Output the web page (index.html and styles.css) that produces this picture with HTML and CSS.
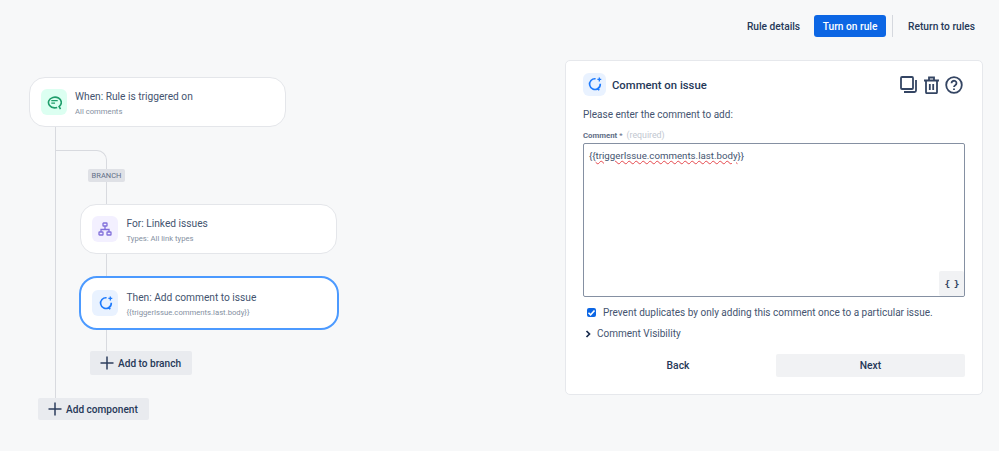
FILE: index.html
```html
<!DOCTYPE html>
<html lang="en">
<head>
<meta charset="utf-8">
<title>Rule editor</title>
<link rel="stylesheet" href="styles.css">
</head>
<body>
<div class="page">
  <header class="topbar">
    <button class="top-btn">Rule details</button>
    <button class="top-btn primary">Turn on rule</button>
    <span class="divider"></span>
    <button class="top-btn return">Return to rules</button>
  </header>
  <main class="main">
    <section class="canvas">
      <span class="line line-main"></span>
      <span class="line-curve"></span>
      <span class="line line-branch"></span>
      <div class="card card-when">
        <span class="tile tile-green">
          <svg width="15" height="15" viewBox="0 0 14 14" fill="none" stroke="#1f9d6b" stroke-width="1.500"><path d="M12.600 13.200 11.300 10.800A6 5 0 1 0 7 12c.9 0 1.700-.1 2.500-.4"/><path d="M4 5.300h6M4 7.500h3.500" stroke-width="1.200"/></svg>
        </span>
        <div class="card-text"><div class="card-title">When: Rule is triggered on</div><div class="card-sub">All comments</div></div>
      </div>
      <div class="badge">BRANCH</div>
      <div class="card card-for">
        <span class="tile tile-purple">
          <svg width="14" height="14" viewBox="0 0 14 14" fill="none" stroke="#8270db" stroke-width="1.300"><rect x="5" y="1" width="4" height="3" rx=".6"/><rect x="1" y="10" width="4" height="3" rx=".6"/><rect x="9" y="10" width="4" height="3" rx=".6"/><path d="M7 4v3.500M3 10V7.500h8V10"/></svg>
        </span>
        <div class="card-text"><div class="card-title">For: Linked issues</div><div class="card-sub">Types: All link types</div></div>
      </div>
      <div class="card card-then">
        <span class="tile tile-blue">
          <svg width="15" height="15" viewBox="0 0 14 14" fill="none" stroke="#1d7afc" stroke-width="1.500"><path d="M8 1.700A5 5 0 1 0 9.900 11l1.600 1.300M12.400 6.300a5 5 0 0 1-2.500 4.700"/><path d="M11.500 .5v3.600M9.700 2.300h3.600" stroke-width="1.200"/></svg>
        </span>
        <div class="card-text"><div class="card-title">Then: Add comment to issue</div><div class="card-sub">{{triggerIssue.comments.last.body}}</div></div>
      </div>
      <button class="add-btn add-branch"><svg width="14" height="14" viewBox="0 0 14 14" stroke="#2c3e5d" stroke-width="1.500"><path d="M7 .5v13M.5 7h13"/></svg>Add to branch</button>
      <button class="add-btn add-component"><svg width="14" height="14" viewBox="0 0 14 14" stroke="#2c3e5d" stroke-width="1.500"><path d="M7 .5v13M.5 7h13"/></svg>Add component</button>
    </section>
    <section class="panel">
      <div class="panel-head">
        <span class="tile tile-blue tile-small">
          <svg width="15" height="15" viewBox="0 0 14 14" fill="none" stroke="#1d7afc" stroke-width="1.500"><path d="M8 1.700A5 5 0 1 0 9.900 11l1.600 1.300M12.400 6.300a5 5 0 0 1-2.500 4.700"/><path d="M11.500 .5v3.600M9.700 2.300h3.600" stroke-width="1.200"/></svg>
        </span>
        <h2 class="panel-title">Comment on issue</h2>
        <div class="panel-tools">
          <svg width="17" height="17" viewBox="0 0 17 17" fill="none" stroke="#344563" stroke-width="1.800"><rect x="1" y="1" width="12" height="12" rx="1"/><path d="M16 4v10.500a1.500 1.500 0 0 1-1.500 1.500H4"/></svg>
          <svg width="15" height="18" viewBox="0 0 15 18" fill="none" stroke="#344563" stroke-width="1.800"><path d="M0 4.500h15M5 4.500V1.500h5v3M2 4.500v11.700a1 1 0 0 0 1 1h9a1 1 0 0 0 1-1V4.500M5.800 8v6M9.200 8v6"/></svg>
          <svg width="18" height="18" viewBox="0 0 18 18" fill="none" stroke="#344563" stroke-width="1.800"><circle cx="9" cy="9" r="7.800"/><path d="M6.500 7.200a2.500 2.400 0 1 1 3.800 2C9.400 9.800 9 10.200 9 11"/><path d="M9 12.500v1.500"/></svg>
        </div>
      </div>
      <p class="prompt">Please enter the comment to add:</p>
      <div class="field-label"><b>Comment</b> <i>*</i> <span>(required)</span></div>
      <div class="textbox">
        <div class="textbox-value">{{<u>triggerIssue.comments.last.body</u>}}</div>
        <button class="smart-btn">{ }</button>
      </div>
      <label class="check-row">
        <span class="check"><svg width="9" height="9" viewBox="0 0 9 9" fill="none" stroke="#fff" stroke-width="1.600"><path d="M1.500 4.700 3.600 6.800 7.500 2.500"/></svg></span>
        Prevent duplicates by only adding this comment once to a particular issue.
      </label>
      <div class="visibility">
        <svg width="6" height="8" viewBox="0 0 6 8" fill="none" stroke="#172b4d" stroke-width="1.700"><path d="M1.500 1 4.500 4 1.500 7"/></svg>
        Comment Visibility
      </div>
      <div class="actions">
        <button class="act back">Back</button>
        <button class="act next">Next</button>
      </div>
    </section>
  </main>
</div>
</body>
</html>
```
FILE: styles.css
```css
* { box-sizing: border-box; }
html, body { margin: 0; padding: 0; }
body {
  background: #f7f8f9;
  color: #172b4d;
  font-family: Roboto, "Liberation Sans", sans-serif;
  font-size: 10px;
}
button { font-family: inherit; border: 0; cursor: pointer; }
.page { width: 999px; height: 451px; overflow: hidden; }

.topbar {
  display: flex;
  align-items: center;
  justify-content: flex-end;
  height: 60px;
  padding: 0 24px 8px 0;
}
.top-btn {
  height: 22px;
  padding: 0;
  background: transparent;
  color: #253858;
  font-size: 10.200px;
  font-weight: 500;
  border-radius: 3px;
}
.top-btn.primary {
  width: 72px;
  margin-left: 14px;
  background: #0c66e4;
  color: #fff;
}
.divider { width: 1px; height: 22px; margin: 0 15px 0 6px; background: #d5d8de; }

.main { display: flex; align-items: flex-start; }
.canvas { position: relative; width: 565px; height: 391px; }

.card {
  position: absolute;
  display: flex;
  align-items: center;
  gap: 8px;
  width: 257px;
  height: 50px;
  padding: 0 11px;
  background: #fff;
  border: 1px solid #e4e6ea;
  border-radius: 16px;
}
.card-when { left: 29px; top: 17px; }
.card-for { left: 80px; top: 144px; gap: 8.500px; }
.card-then {
  left: 79px;
  top: 216px;
  width: 260px;
  height: 54px;
  gap: 8.500px;
  border: 2px solid #4c9aff;
  border-radius: 18px;
}
.tile {
  display: flex;
  align-items: center;
  justify-content: center;
  flex: none;
  width: 26px;
  height: 26px;
  border-radius: 6px;
}
.tile-green { background: #dcfff1; }
.tile-purple { background: #f3f0ff; }
.tile-blue { background: #e9f2ff; }
.tile-small { width: 23px; height: 23px; }
.card-text { padding-top: 2px; }
.card-title { color: #44546f; font-size: 10.200px; line-height: 14px; }
.card-sub { margin-top: 2px; color: #8590a2; font-size: 7.700px; line-height: 11px; }

.line { position: absolute; width: 1px; background: #d8dadf; }
.line-main { left: 55px; top: 66px; height: 280px; }
.line-branch { left: 106px; top: 115px; height: 183px; }
.line-curve {
  position: absolute;
  left: 55px;
  top: 90px;
  width: 52px;
  height: 30px;
  border-top: 1px solid #d8dadf;
  border-right: 1px solid #d8dadf;
  border-top-right-radius: 10px;
}
.badge {
  position: absolute;
  left: 88px;
  top: 109px;
  width: 37px;
  height: 13px;
  background: #dfe1e6;
  color: #626f86;
  font-size: 7.500px;
  line-height: 13px;
  text-align: center;
  border-radius: 2px;
}
.add-btn {
  position: absolute;
  display: flex;
  align-items: center;
  gap: 4px;
  padding: 0 0 0 10px;
  background: #e9ebef;
  color: #253858;
  font-size: 10.100px;
  font-weight: 500;
  border-radius: 2px;
}
.add-branch { left: 90px; top: 291px; width: 102px; height: 24px; }
.add-component { left: 38px; top: 338px; width: 111px; height: 22px; }

.panel {
  width: 418px;
  height: 335px;
  padding: 12px 17px 0;
  background: #fff;
  border: 1px solid #e6e8ec;
  border-radius: 5px;
}
.panel-head { display: flex; align-items: center; height: 23px; }
.panel-title { margin: 0 0 0 6px; padding-top: 1px; color: #253858; font-size: 11.300px; font-weight: 500; }
.panel-tools { display: flex; align-items: center; gap: 6.500px; margin-left: auto; margin-right: 2px; }
.prompt { margin: 11px 0 0; color: #44546f; font-size: 10px; line-height: 15px; }
.field-label { margin-top: 7px; color: #626f86; font-size: 7.800px; line-height: 12px; }
.field-label b { font-weight: 700; }
.field-label i { font-style: normal; color: #626f86; }
.field-label span { margin-left: 2px; color: #c1c7d0; font-size: 8.800px; }
.textbox {
  position: relative;
  width: 382px;
  height: 154px;
  margin-top: 1px;
  padding: 4px 5px;
  border: 1px solid #8590a2;
  border-radius: 2px;
}
.textbox-value { color: #44546f; font-size: 9.700px; line-height: 15px; }
.textbox-value u { text-decoration: underline wavy #e5484d 1px; text-underline-offset: 1px; }
.smart-btn {
  position: absolute;
  right: 0;
  bottom: 0;
  width: 25px;
  height: 25px;
  padding: 0;
  background: #f1f2f4;
  color: #344563;
  font-family: "DejaVu Sans Mono", monospace;
  font-size: 9.500px;
  font-weight: 700;
  letter-spacing: -1px;
  border-radius: 2px;
}
.check-row {
  display: flex;
  align-items: center;
  gap: 7px;
  margin: 8px 0 0 4px;
  color: #44546f;
  font-size: 10px;
  line-height: 15px;
  white-space: nowrap;
}
.check {
  display: flex;
  align-items: center;
  justify-content: center;
  flex: none;
  width: 9px;
  height: 9px;
  background: #0c66e4;
  border-radius: 2px;
}
.visibility {
  display: flex;
  align-items: center;
  gap: 6px;
  margin: 6px 0 0 2px;
  color: #44546f;
  font-size: 10px;
  line-height: 15px;
}
.actions { display: flex; gap: 6px; margin-top: 13px; width: 382px; }
.act {
  flex: 1;
  height: 23px;
  padding: 0;
  background: transparent;
  color: #253858;
  font-size: 10.300px;
  font-weight: 500;
  border-radius: 2px;
}
.act.back { padding-left: 3px; }
.act.next { flex: none; width: 189px; background: #f1f2f4; }
```
